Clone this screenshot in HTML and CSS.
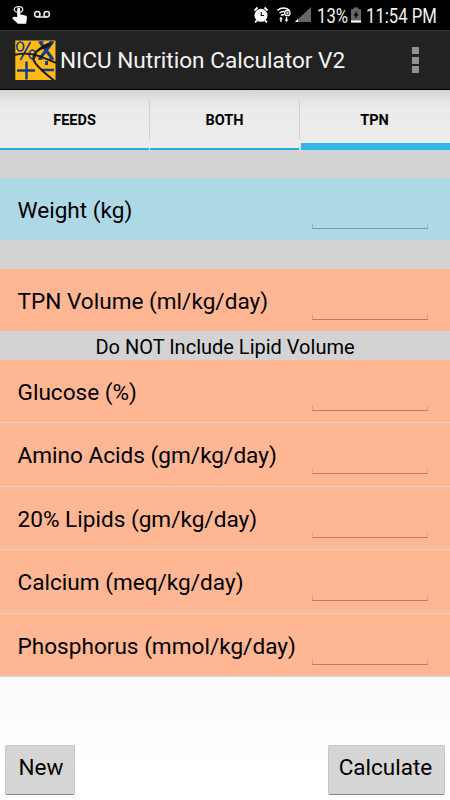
FILE: index.html
```
<!DOCTYPE html>
<html lang="en">
<head>
<meta charset="utf-8">
<title>NICU Nutrition Calculator V2</title>
<link rel="stylesheet" href="styles.css">
</head>
<body>
<div class="status">
  <svg class="status-left" width="60" height="30" viewBox="0 0 60 30">
    <path d="M17.200 17V9.200q0-1.700 1.500-1.700t1.500 1.700v5.300l5.300 1.100q1.500.400 1.500 2.200l-.9 6H17.800l-5.600-5.500 1.300-1.500z" fill="#fff"/>
    <ellipse cx="18.500" cy="9.500" rx="4.300" ry="2.800" fill="none" stroke="#eee" stroke-width="1.200"/>
    <g fill="none" stroke="#eee" stroke-width="1.500"><circle cx="37.300" cy="14.200" r="2.700"/><circle cx="46.700" cy="14.200" r="2.700"/><path d="M37.300 17h9.400"/></g>
  </svg>
  <svg class="status-icons" width="62" height="30" viewBox="250 0 62 30">
    <circle cx="261" cy="15.300" r="6.500" fill="#fff"/>
    <path d="M254.500 10.500l3-3M267.500 10.500l-3-3M257 20.500l-2 1.700M265 20.500l2 1.700" stroke="#fff" stroke-width="1.800"/>
    <path d="M261.200 12v3.500h2.800" fill="none" stroke="#000" stroke-width="1.100"/>
    <g fill="none" stroke="#fff"><path d="M277.500 10.300q6-4.500 12 0" stroke-width="1.600"/><path d="M279.500 13q2.500-2 5-1.300M281 15.500q1.500-1.200 3-.7" stroke-width="1.500"/><circle cx="287.300" cy="13" r="2.700" stroke-width="1.300"/><path d="M287.300 11.500v3M285.800 13h3" stroke-width=".9"/></g>
    <path d="M281 16.800l2 2.500h-1.300v2.700h-1.400v-2.700H279zM284.500 19.500h1.300v-2.500h1.400v2.500h1.300l-2 2.500z" fill="#fff"/>
    <path d="M311 7v15h-16z" fill="#666"/><path d="M298 19v3h-3z" fill="#fff"/>
  </svg>
  <span class="percent">13%</span>
  <svg class="battery" width="12" height="30" viewBox="350 0 12 30">
    <path d="M353.500 7.500h5v1.800h2.500V22.500h-10V9.300h2.500z" fill="#666"/><path d="M351 20.500h10v2h-10z" fill="#fff"/><path d="M357.300 10.500l-4 5h2.200l-.7 3.500 4-5h-2.300z" fill="#000"/>
  </svg>
  <span class="clock">11:54 PM</span>
</div>
<header class="bar">
  <svg class="logo" width="42" height="42" viewBox="0 0 42 42">
    <path d="M0 0h41.500v41H0z" fill="#17223a"/><path d="M.3.500h40.200v39.500H.3z" fill="#ffb914"/>
    <g fill="none" stroke="#163a8c">
      <ellipse cx="5.300" cy="6.500" rx="3.400" ry="4.500" stroke-width="1.700"/><path d="M15.500 2L5.500 20" stroke-width="1.700"/><ellipse cx="17.500" cy="14.500" rx="3.300" ry="4.300" stroke-width="1.700"/>
      <path d="M25 2l12.500 17M37.500 2l-13 17" stroke-width="3"/><path d="M23.500 2h5M34 2h5M23 19h4.500M34 19h5" stroke-width="1.300"/>
      <path d="M2 30.500h18M11.500 21.500v18M26 30h13" stroke-width="2.500"/><path d="M31.500 21v4" stroke-width="3"/>
    </g>
    <g fill="none" stroke="#181818"><path d="M0 14.800q14-3 25 1.500t16 6.500" stroke-width="1.900"/><path d="M27 7q-10 6.500-8.500 12.500T39 40.500" stroke-width="2"/></g>
    <path d="M22 13q4-9 14-11 1.500 3-4.500 6-6 1-9.500 5z" fill="#181818"/>
  </svg>
  <h1>NICU Nutrition Calculator V2</h1>
  <div class="more"><i></i><i></i><i></i></div>
</header>
<nav class="tabs"><div class="tab">FEEDS</div><div class="tab">BOTH</div><div class="tab active">TPN</div></nav>
<main>
  <div class="row weight"><label>Weight (kg)</label><div class="field"></div></div>
  <div class="row volume"><label>TPN Volume (ml/kg/day)</label><div class="field"></div></div>
  <p class="note"><span>Do NOT Include Lipid Volume</span></p>
  <div class="list">
    <div class="row"><label>Glucose (%)</label><div class="field"></div></div>
    <div class="row"><label>Amino Acids (gm/kg/day)</label><div class="field"></div></div>
    <div class="row"><label>20% Lipids (gm/kg/day)</label><div class="field"></div></div>
    <div class="row"><label>Calcium (meq/kg/day)</label><div class="field"></div></div>
    <div class="row"><label>Phosphorus (mmol/kg/day)</label><div class="field"></div></div>
  </div>
</main>
<footer><button class="new">New</button><button class="calc">Calculate</button></footer>
</body>
</html>
```
FILE: styles.css
```
* { box-sizing: border-box; }
body { margin: 0; width: 450px; height: 800px; overflow: hidden; display: flex; flex-direction: column; font-family: Roboto, "Liberation Sans", sans-serif; color: #000; background: linear-gradient(#f2f2f2, #fafafa 677px, #fff 770px); }
.status { height: 30px; flex: none; background: #000; color: #f2f2f2; display: flex; align-items: center; font-size: 20px; line-height: 30px; white-space: nowrap; }
.status svg { flex: none; }
.status-icons { margin-left: 190px; }
.percent, .clock { transform: scaleX(.835); transform-origin: 0 50%; padding-top: 1px; }
.percent { margin-left: 5px; width: 33px; }
.battery { flex: none; }
.clock { margin-left: 4px; }
.bar { height: 60px; flex: none; background: #222; border-top: 1px solid #3c3c3c; border-bottom: 1px solid #000; display: flex; align-items: center; padding: 1px 31px 0 15px; }
.logo { flex: none; }
h1 { margin: 0 0 0 3px; font-size: 22.6px; font-weight: 400; line-height: 30px; color: #f3f3f3; white-space: nowrap; }
.more { margin-left: auto; display: grid; gap: 2.5px; padding-bottom: 1px; }
.more i { width: 7px; height: 7px; background: #929292; }
.tabs { height: 60px; flex: none; display: grid; grid-template-columns: repeat(3, 1fr); background: linear-gradient(#d2d2d2, #e5e5e5 10px, #ebebeb 22px, #ececec); }
.tab { position: relative; height: 60px; text-align: center; font-size: 14.5px; font-weight: 700; line-height: 62px; border-bottom: 2px solid #1eb0e6; }
.tab:first-child { margin-right: 1px; }
.tab:nth-child(2) { margin-right: 1px; }
.tab:not(:last-child)::after { content: ""; position: absolute; right: -1px; top: 10px; width: 1px; height: 40px; background: #cfcfcf; }
.tab.active { margin-left: 1px; padding-right: 2px; border-bottom: 7px solid #33b5e5; }
main { padding-top: 28px; height: 527px; flex: none; background: #d3d3d3; }
.row { display: flex; justify-content: space-between; padding: 0 22px 0 17.5px; height: 62px; background: #ffb693; }
.row label { font-size: 22.6px; line-height: 27px; margin-top: 19px; white-space: nowrap; }
.row.weight { background: #add8e6; margin-bottom: 29px; }
.field { width: 116px; height: 5px; margin-top: 46px; border: 1px solid rgba(0,0,0,.3); border-top: 0; border-left-color: rgba(0,0,0,.15); border-right-color: rgba(0,0,0,.15); flex: none; }
.note { margin: 0; height: 29px; text-align: center; font-size: 20px; line-height: 32px; }
.list { display: grid; grid-template-rows: repeat(5, 63.4px); height: 317px; overflow: hidden; }
.list .row { height: auto; border-bottom: 1px solid #dfd5d0; }
.list label { margin-top: 19px; }
footer { flex: 1; display: flex; justify-content: space-between; align-items: flex-start; padding: 68px 5px 0; }
button { height: 50px; border: 1px solid #c8c8c8; border-bottom-color: #858585; border-radius: 2px; background: #d5d5d5; font: 22.5px Roboto, "Liberation Sans", sans-serif; color: #000; padding: 0 0 6px; }
.new { width: 70px; padding-left: 2px; }
.calc { width: 117px; padding-right: 2px; }
```
